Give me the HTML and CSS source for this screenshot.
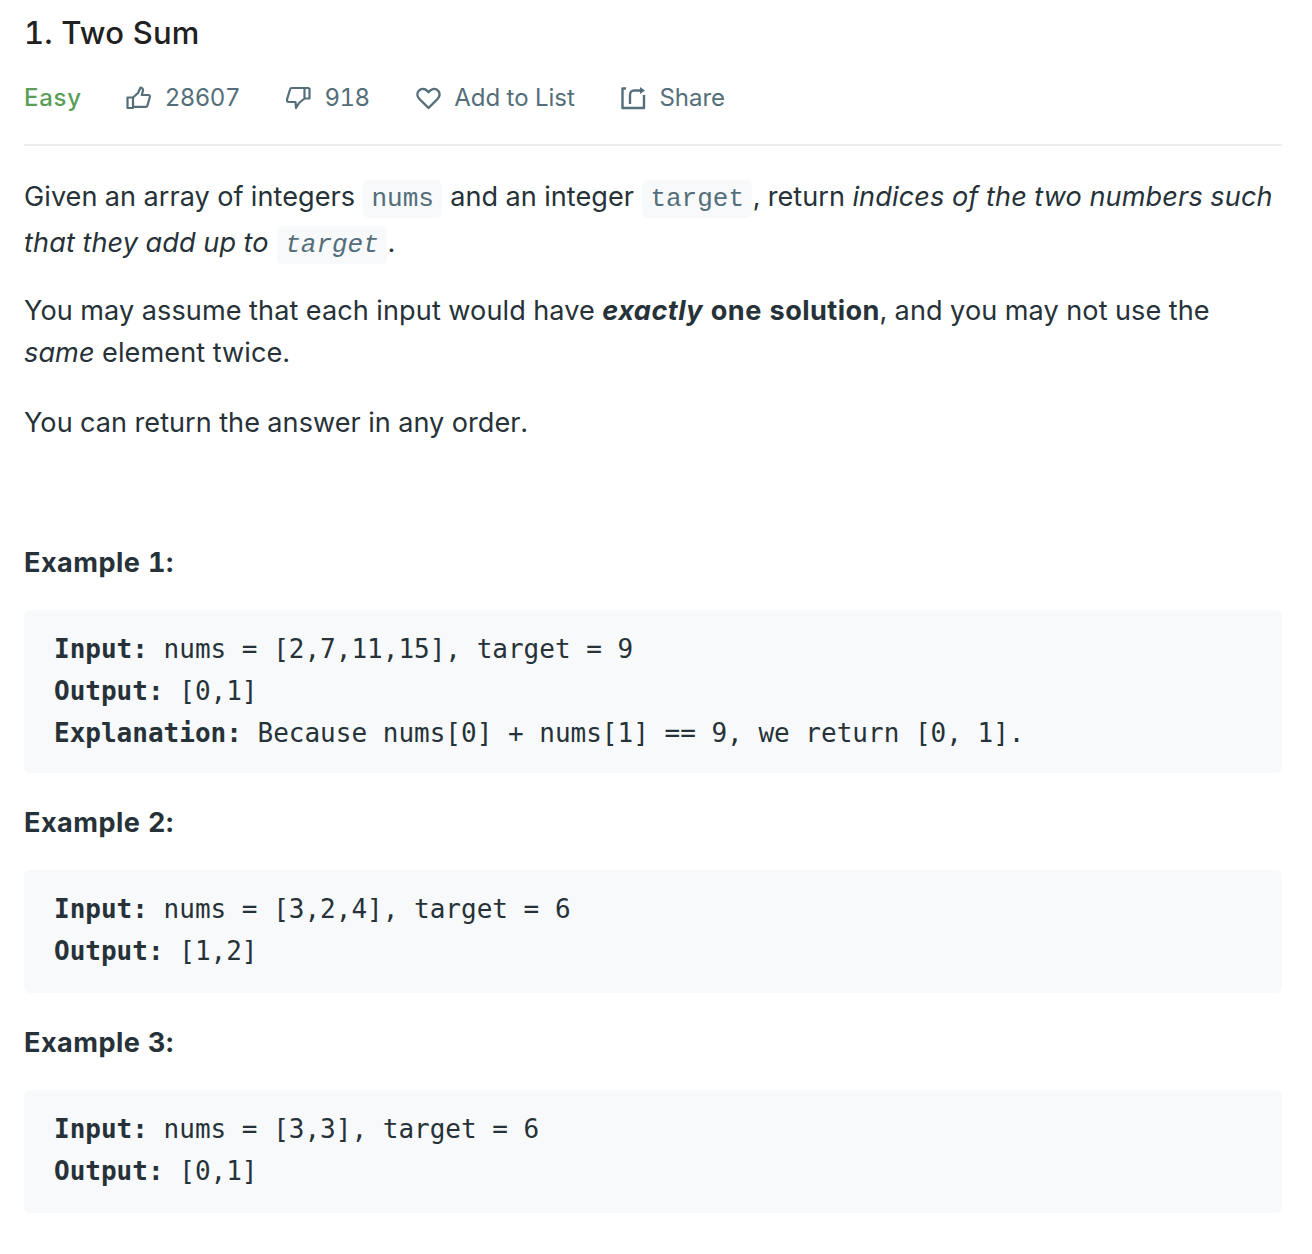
FILE: index.html
```html
<!DOCTYPE html>
<html lang="en">
<head>
  <meta charset="UTF-8">
  <title>1. Two Sum</title>
  <link rel="stylesheet" href="styles.css">
</head>
<body>

  <div class="question">
    <h1 class="title">1. Two Sum</h1>

    <div class="meta">
      <span class="difficulty">Easy</span>
      <span class="action">
        <svg class="icon" viewBox="0 0 25 24" fill="none" stroke="currentColor" stroke-width="2.200" stroke-linejoin="round"><path d="M1.500 11.500h5.500v10.500h-5.500z"/><path d="M7 11.500l5-4.500 2.500-5.500c2 .2 2.800 2 2.300 3.800l-1 3.700h6.500c1.200 0 1.800 1 1.500 2.200l-2.300 8.300c-.2.800-.8 1.300-1.600 1.300h-12.900"/></svg>
        <span class="count">28607</span>
      </span>
      <span class="action">
        <svg class="icon" viewBox="0 0 25 24" fill="none" stroke="currentColor" stroke-width="2.200" stroke-linejoin="round"><path d="M23.500 2v10.500h-5"/><path d="M18.500 2v10.500l-5.500 4.500-3 5-.5-6h-6.500c-1.500 0-2.500-1-2-2.500l3-10c.2-1 1-1.500 2-1.500h17.500"/></svg>
        <span class="count">918</span>
      </span>
      <span class="action">
        <svg class="icon" viewBox="0 0 25 24" fill="none" stroke="currentColor" stroke-width="2.400" stroke-linejoin="round"><path d="M12.500 22l-9-9c-2.700-2.700-2.700-6.200-.5-8.400 2.400-2.300 5.800-2 8.200.3l1.300 1.300 1.300-1.300c2.400-2.300 5.800-2.600 8.200-.3 2.200 2.200 2.200 5.700-.5 8.400z"/></svg>
        <span>Add to List</span>
      </span>
      <span class="action">
        <svg class="icon" viewBox="0 0 25 24" fill="none" stroke="currentColor" stroke-width="2.400" stroke-linejoin="round"><path d="M5 2.500h-3.500v19.500h21.500v-13"/><path d="M9 18v-9c0-2.500 1.500-4.500 4-4.500h7"/><path d="M19 1l5 3.500-5 3.500z" stroke-width="0" fill="currentColor"/></svg>
        <span>Share</span>
      </span>
    </div>

    <div class="content">
      <p class="intro">Given an array of integers <code>nums</code> and an integer <code>target</code>, return <em>indices of the two numbers such that they add up to <code>target</code></em>.</p>
      <p class="assume">You may assume that each input would have <strong><em>exactly</em> one solution</strong>, and you may not use the<br><em>same</em> element twice.</p>
      <p>You can return the answer in any order.</p>

      <p class="example-title first"><strong>Example 1:</strong></p>
<pre class="example-long"><strong>Input:</strong> nums = [2,7,11,15], target = 9
<strong>Output:</strong> [0,1]
<strong>Explanation:</strong> Because nums[0] + nums[1] == 9, we return [0, 1].</pre>

      <p class="example-title"><strong>Example 2:</strong></p>
<pre><strong>Input:</strong> nums = [3,2,4], target = 6
<strong>Output:</strong> [1,2]</pre>

      <p class="example-title"><strong>Example 3:</strong></p>
<pre><strong>Input:</strong> nums = [3,3], target = 6
<strong>Output:</strong> [0,1]</pre>
    </div>
  </div>

</body>
</html>
```

FILE: styles.css
```css
body {
  margin: 0;
  background: #fff;
  font-family: Inter, "Open Sans", sans-serif;
  font-variant-numeric: tabular-nums;
  color: #263238;
}
.question { padding: 14px 30px 40px 24px; }
.title { margin: 0; font-size: 31px; line-height: 38px; font-weight: 500; letter-spacing: 0.2px; color: #212121; }

.meta { display: flex; align-items: center; margin-top: 30px; padding-bottom: 30px; border-bottom: 2px solid #eeeeee; font-size: 24px; line-height: 32px; color: #546e7a; }
.difficulty { color: #5a9e57; font-weight: 500; letter-spacing: 0.7px; margin-right: 44.5px; }
.action { display: flex; align-items: center; margin-right: 46px; }
.icon { width: 25px; height: 24px; margin-right: 13.5px; }
.count { letter-spacing: -0.5px; }

.content { font-size: 27.1px; line-height: 42px; letter-spacing: 0.05px; }
.content p { margin: 0 0 28px; }
.content .intro { margin: 29px 0 23px; line-height: 44px; }
.intro em { letter-spacing: 0.14px; }
.assume { letter-spacing: 0.1px; }
.content p strong { font-weight: 700; letter-spacing: 0.45px; }
code { font-family: "Liberation Mono", monospace; font-size: 26px; letter-spacing: 0; color: #546e7a; background: #f7f9fa; padding: 4px 8px; margin: 0 1px; border-radius: 6px; }
.intro em code { letter-spacing: 0; }
.content .example-title { margin-bottom: 26px; }
.content .example-title.first { margin-top: 98px; }
pre { margin: 0 0 29px; padding: 18px 30px 21px; background: #f7f9fa; border-radius: 6px; font-family: "DejaVu Sans Mono", monospace; font-size: 26px; line-height: 42px; letter-spacing: 0; color: #263238; }
.example-long { padding-bottom: 19px; }
```
